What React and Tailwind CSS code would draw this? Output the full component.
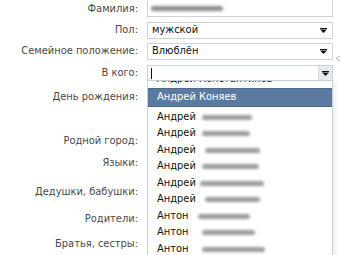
import React from 'react';

const font = { fontFamily: '"DejaVu Sans", "Liberation Sans", sans-serif' };

// blurred surnames in the list: [first name, blur width, gap]
const people = [
  ['Андрей', 50, 6],
  ['Андрей', 48, 6],
  ['Андрей', 55, 9],
  ['Андрей', 57, 6],
  ['Андрей', 64, 4],
  ['Андрей', 55, 9],
  ['Антон', 52, 10],
  ['Антон', 53, 14],
  ['Антон', 63, 14],
];

function Arrow() {
  return (
    <svg width="7" height="5" viewBox="0 0 7 5" className="block">
      <rect x="0" y="0" width="7" height="1" fill="#111" />
      <path d="M0 1.5 L7 1.5 L3.5 5 Z" fill="#111" />
    </svg>
  );
}

function Select({ value }) {
  return (
    <div className="h-[17px] border border-[#cdd3da] bg-white flex items-center justify-between pl-[4px] pr-[5px] text-[9.9px] text-[#111]">
      <span>{value}</span>
      <Arrow />
    </div>
  );
}

export default function App() {
  return (
    <div className="relative w-[340px] h-[255px] overflow-hidden bg-white" style={font}>
      <div className="flex flex-col -mt-[1px]">
        {/* Фамилия */}
        <div className="flex items-center gap-[9px] h-[18px]">
          <div className="w-[138px] text-right text-[9.9px] text-[#4a4a4a] pt-[2px]">Фамилия:</div>
          <div className="w-[186px] h-[18px] border border-[#cdd3da] bg-white flex items-center pl-[3px]">
            <span className="block w-[72px] h-[5px] rounded-full bg-[#8a8a8a] blur-[1.5px]"></span>
          </div>
        </div>

        {/* Пол */}
        <div className="flex items-center gap-[9px] h-[17px] mt-[5px]">
          <div className="w-[138px] text-right text-[9.9px] text-[#4a4a4a]">Пол:</div>
          <div className="w-[186px]"><Select value="мужской" /></div>
        </div>

        {/* Семейное положение */}
        <div className="flex items-center gap-[9px] h-[17px] mt-[4px]">
          <div className="w-[138px] text-right text-[9.9px] text-[#4a4a4a] whitespace-nowrap">Семейное положение:</div>
          <div className="w-[186px]"><Select value="Влюблён" /></div>
        </div>

        {/* В кого */}
        <div className="flex items-center gap-[9px] h-[16px] mt-[5px]">
          <div className="w-[138px] text-right text-[9.9px] text-[#4a4a4a]">В кого:</div>
          <div className="w-[186px] h-[16px] border border-[#cdd3da] bg-white flex items-stretch">
            <div className="flex-1 flex items-center pl-[3px]">
              <span className="block w-px h-[11px] bg-[#111]"></span>
            </div>
            <div className="w-[14px] bg-[#e6eaee] border-l border-[#d8dde3] flex items-center justify-center">
              <Arrow />
            </div>
          </div>
        </div>

        {/* остальные подписи под выпадающим списком */}
        <div className="flex flex-col w-[138px] text-right text-[9.9px] leading-[14px] text-[#4a4a4a]">
          <div className="mt-[9px]">День рождения:</div>
          <div className="mt-[30px]">Родной город:</div>
          <div className="mt-[8px]">Языки:</div>
          <div className="mt-[15px]">Дедушки, бабушки:</div>
          <div className="mt-[13px]">Родители:</div>
          <div className="mt-[11px]">Братья, сестры:</div>
        </div>
      </div>

      {/* small mark on the right edge */}
      <svg width="4" height="5" viewBox="0 0 4 5" className="absolute left-[336px] top-[56px]">
        <path d="M4 0 L0 2.5 L4 5" fill="none" stroke="#bbb" strokeWidth="1" />
      </svg>

      {/* dropdown list */}
      <div className="absolute left-[147px] top-[81px] w-[186px] h-[190px] overflow-hidden bg-white border-x border-[#c9cfd6] shadow-[3px_0_3px_rgba(0,0,0,0.06)] text-[9.9px] text-[#111]">
        <div className="-mt-[10px]">
          <div className="h-[17px] flex items-center pl-[9px]">Андрей Константинов</div>
          <div className="h-[19px] flex items-center pl-[9px] bg-[#5b7aa2] text-white border-y border-[#4d6a8f]">Андрей Коняев</div>
          <div className="h-[2px]"></div>
          {people.map(([name, w, gap], i) => (
            <div key={i} className="h-[16.5px] flex items-center pl-[9px]">
              <span>{name}</span>
              <span
                className="block h-[5px] rounded-full bg-[#9a9a9a] blur-[1.5px]"
                style={{ width: w, marginLeft: gap }}
              ></span>
            </div>
          ))}
        </div>
      </div>
    </div>
  );
}
